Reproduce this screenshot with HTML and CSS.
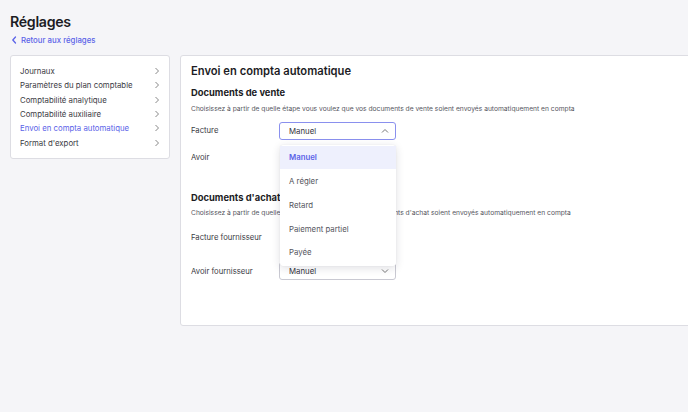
FILE: index.html
```html
<!DOCTYPE html>
<html lang="fr">
<head>
<meta charset="utf-8">
<title>Réglages</title>
<link rel="stylesheet" href="styles.css">
</head>
<body>
<div class="page">
  <h1 class="title">Réglages</h1>
  <a class="back" href="#">
    <svg width="7" height="8" viewBox="0 0 7 8"><path d="M4.5 1 L1.8 4 L4.5 7" fill="none" stroke="#5b63e8" stroke-width="1.3" stroke-linecap="round" stroke-linejoin="round"/></svg>
    Retour aux réglages
  </a>
  <div class="layout">
    <nav class="sidebar">
      <a class="nav-item" href="#"><span>Journaux</span><svg class="chev" width="6" height="8" viewBox="0 0 6 8"><path d="M1.5 1 L4.5 4 L1.5 7" fill="none" stroke="#888" stroke-width="1"/></svg></a>
      <a class="nav-item" href="#"><span>Paramètres du plan comptable</span><svg class="chev" width="6" height="8" viewBox="0 0 6 8"><path d="M1.5 1 L4.5 4 L1.5 7" fill="none" stroke="#888" stroke-width="1"/></svg></a>
      <a class="nav-item" href="#"><span>Comptabilité analytique</span><svg class="chev" width="6" height="8" viewBox="0 0 6 8"><path d="M1.5 1 L4.5 4 L1.5 7" fill="none" stroke="#888" stroke-width="1"/></svg></a>
      <a class="nav-item" href="#"><span>Comptabilité auxiliaire</span><svg class="chev" width="6" height="8" viewBox="0 0 6 8"><path d="M1.5 1 L4.5 4 L1.5 7" fill="none" stroke="#888" stroke-width="1"/></svg></a>
      <a class="nav-item active" href="#"><span>Envoi en compta automatique</span><svg class="chev" width="6" height="8" viewBox="0 0 6 8"><path d="M1.5 1 L4.5 4 L1.5 7" fill="none" stroke="#888" stroke-width="1"/></svg></a>
      <a class="nav-item" href="#"><span>Format d'export</span><svg class="chev" width="6" height="8" viewBox="0 0 6 8"><path d="M1.5 1 L4.5 4 L1.5 7" fill="none" stroke="#888" stroke-width="1"/></svg></a>
    </nav>
    <main class="card">
      <h2 class="card-title">Envoi en compta automatique</h2>

      <section class="section">
        <h3 class="section-title">Documents de vente</h3>
        <p class="desc">Choisissez à partir de quelle étape vous voulez que vos documents de vente soient envoyés automatiquement en compta</p>
        <div class="field f1">
          <span class="label">Facture</span>
          <div class="select-wrap">
            <div class="select open">
              <span>Manuel</span>
              <svg width="8" height="6" viewBox="0 0 8 6"><path d="M1 4.5 L4 1.5 L7 4.5" fill="none" stroke="#777" stroke-width="1"/></svg>
            </div>
            <ul class="menu">
              <li class="menu-item selected">Manuel</li>
              <li class="menu-item">A régler</li>
              <li class="menu-item">Retard</li>
              <li class="menu-item">Paiement partiel</li>
              <li class="menu-item">Payée</li>
            </ul>
          </div>
        </div>
        <div class="field f2">
          <span class="label">Avoir</span>
        </div>
      </section>

      <section class="section second">
        <h3 class="section-title">Documents d'achat</h3>
        <p class="desc">Choisissez à partir de quelle étape vous voulez que vos documents d'achat soient envoyés automatiquement en compta</p>
        <div class="field f3">
          <span class="label">Facture fournisseur</span>
        </div>
        <div class="field f4">
          <span class="label">Avoir fournisseur</span>
          <div class="select-wrap">
            <div class="select">
              <span>Manuel</span>
              <svg width="8" height="6" viewBox="0 0 8 6"><path d="M1 1.5 L4 4.5 L7 1.5" fill="none" stroke="#777" stroke-width="1"/></svg>
            </div>
          </div>
        </div>
      </section>
    </main>
  </div>
</div>
</body>
</html>
```
FILE: styles.css
```css
* { box-sizing: border-box; }
html, body {
  margin: 0;
  padding: 0;
  background: #f5f5f8;
  overflow: hidden;
}
body {
  font-family: Inter, "Noto Sans", sans-serif;
  color: #2b2b33;
  width: 688px;
  height: 412px;
}
.page {
  padding: 12px 0 0 10px;
}
.title {
  margin: 0;
  font-size: 14.2px;
  line-height: 20px;
  font-weight: 600;
  color: #1c1c24;
  letter-spacing: -0.3px;
}
.back {
  display: flex;
  align-items: center;
  gap: 3px;
  margin-top: 2px;
  margin-left: 1px;
  font-size: 7.8px;
  line-height: 12px;
  font-weight: 500;
  color: #5b63e8;
  text-decoration: none;
}
.layout {
  display: flex;
  align-items: flex-start;
  gap: 10px;
  margin-top: 9px;
  width: 760px;
}
.sidebar {
  width: 160px;
  flex: none;
  background: #fff;
  border: 1px solid #dddde3;
  border-radius: 3px;
  padding: 8px 9px 8px 9px;
  display: flex;
  flex-direction: column;
}
.nav-item {
  display: flex;
  justify-content: space-between;
  align-items: center;
  height: 14.3px;
  font-size: 7.8px;
  color: #3b3b44;
  text-decoration: none;
}
.nav-item.active { color: #5b63e8; }
.card {
  width: 560px;
  flex: none;
  height: 271px;
  background: #fff;
  border: 1px solid #dddde3;
  border-radius: 3px;
  padding: 7px 10px;
}
.card-title {
  margin: 0;
  font-size: 11.2px;
  line-height: 16px;
  font-weight: 600;
  color: #1c1c24;
}
.section { margin-top: 7px; }
.section.second { margin-top: 24px; }
.section-title {
  margin: 0;
  font-size: 9.4px;
  line-height: 14px;
  font-weight: 700;
  color: #1c1c24;
}
.desc {
  margin: 4.5px 0 0 0;
  font-size: 6.7px;
  line-height: 9px;
  color: #55555e;
  white-space: nowrap;
}
.field {
  display: flex;
  align-items: center;
  height: 18px;
}
.f1 { margin-top: 8px; }
.f2 { margin-top: 9px; }
.f3 { margin-top: 10.5px; }
.f4 { margin-top: 15.5px; }
.label {
  width: 88px;
  font-size: 7.7px;
  color: #3b3b44;
}
.select-wrap {
  position: relative;
  width: 117px;
}
.select {
  height: 18px;
  border: 1px solid #c9c9d2;
  border-radius: 3px;
  display: flex;
  align-items: center;
  justify-content: space-between;
  padding: 0 6px 0 9px;
  font-size: 7.8px;
  color: #33333b;
  background: #fff;
}
.select.open { border-color: #8a90ee; }
.menu {
  position: absolute;
  top: 23px;
  left: 1px;
  width: 116px;
  margin: 0;
  padding: 1px 0 2px;
  list-style: none;
  background: #fff;
  border-radius: 3px;
  box-shadow: 0 2px 8px rgba(30, 30, 60, 0.14), 0 0 1px rgba(30,30,60,0.12);
  z-index: 5;
}
.menu-item {
  height: 23.75px;
  display: flex;
  align-items: center;
  padding-left: 9px;
  font-size: 7.8px;
  color: #55555e;
}
.menu-item.selected {
  background: #eef0fd;
  color: #5b63e8;
  font-weight: 600;
}
```
